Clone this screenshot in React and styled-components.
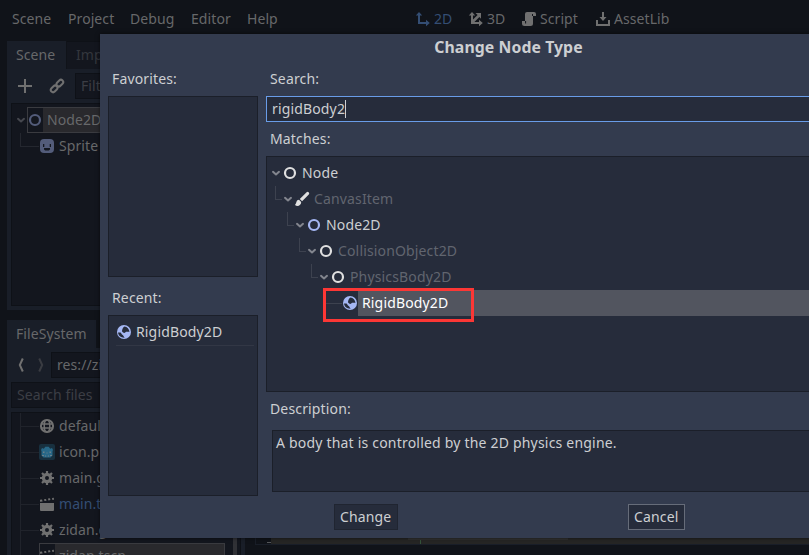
import React from 'react';
import styled, { createGlobalStyle } from 'styled-components';

const Global = createGlobalStyle`
  * { box-sizing: border-box; }
  body { margin: 0; background: #101319; overflow: hidden; }
`;

const c = {
  bar: '#101319', panel: '#191e28', field: '#13161e', line: '#0e1117',
  text: '#67686a', faint: '#3c3e45', accent: '#344e74', icon: '#707070', node2d: '#535c7a',
  dialog: '#333b4e', inset: '#262c3b', edge: '#1b1f29', label: '#cdcfd2', dim: '#61656f',
  white: '#e0e0e0', blue: '#a5b7f3',
};

const Screen = styled.div`
  position: relative;
  width: 809px;
  height: 555px;
  overflow: hidden;
  display: flex;
  flex-direction: column;
  background: ${c.bar};
  color: ${c.text};
  font: 14px/20px "Noto Sans", sans-serif;
  letter-spacing: 0.08px;
  white-space: nowrap;
`;
const MenuBar = styled.header`
  display: flex;
  flex: none;
  height: 41px;
  padding: 0 0 3px 12px;
  align-items: center;
`;
const MenuItem = styled.span`
  width: ${(p) => p.$w}px;
`;
const Mode = styled.span`
  display: flex;
  align-items: center;
  gap: 3px;
  width: ${(p) => p.$w}px;
  color: ${(p) => (p.$active ? c.accent : c.text)};
`;
const Icon = styled.svg`
  display: block;
  flex: none;
  width: 16px;
  height: 16px;
  color: ${(p) => p.$color || c.icon};
`;
const Workspace = styled.div`
  display: flex;
  flex: 1;
  min-height: 0;
`;
const DockColumn = styled.aside`
  display: flex;
  flex-direction: column;
  gap: 10px;
  width: 238px;
  margin-left: 7px;
`;
const Dock = styled.section`
  flex: none;
  height: ${(p) => p.$h}px;
  display: flex;
  flex-direction: column;
`;
const Tabs = styled.div`
  display: flex;
  gap: 1px;
  height: 28px;
`;
const Tab = styled.div`
  width: ${(p) => p.$w}px;
  padding: 3px 0 0 9px;
  color: ${(p) => (p.$active ? c.text : '#33363d')};
  background: ${(p) => (p.$active ? c.panel : c.field)};
  border: 1px solid ${(p) => (p.$active ? c.panel : c.line)};
  border-width: 1px 1px 0 0;
`;
const DockBody = styled.div`
  flex: 1;
  min-height: 0;
  padding: 4px;
  background: ${c.panel};
  display: flex;
  flex-direction: column;
  gap: 4px;
`;
const Tools = styled.div`
  display: flex;
  align-items: center;
  height: 26px;
  padding-left: ${(p) => p.$pad}px;
  gap: ${(p) => p.$gap}px;
`;
const Field = styled.div`
  flex: 1;
  height: 26px;
  margin-left: ${(p) => p.$shift || 0}px;
  padding: 2px 5px;
  background: ${c.field};
  border: 1px solid ${c.line};
  color: ${(p) => (p.$faint ? c.faint : c.text)};
`;
const SearchFiles = styled(Field)`
  flex: none;
`;
const DarkTree = styled.div`
  flex: 1;
  min-height: 0;
  overflow: hidden;
  display: flex;
  justify-content: space-between;
  padding-top: ${(p) => p.$pad}px;
  background: ${c.field};
  border: 1px solid ${c.line};
`;
const TreeRows = styled.div`
  flex: 1;
`;
const Scrollbar = styled.div`
  width: 4px;
  margin-right: 3px;
  background: #303136;
`;
const DockRow = styled.div`
  display: flex;
  align-items: center;
  height: 26px;
  padding-left: ${(p) => p.$indent}px;
  color: ${(p) => (p.$active ? c.accent : c.text)};
`;
const DockPick = styled.div`
  display: flex;
  align-items: center;
  height: 26px;
  width: ${(p) => p.$w}px;
  border: 1px solid #3a3b40;

  & > svg { margin-left: -1px; }
`;
const DockPickText = styled.div`
  flex: 1;
  height: 24px;
  padding: 2px 0 0 4px;
  background: #29292d;
`;
const Branch = styled.i`
  flex: none;
  align-self: stretch;
  width: 19px;
  border-left: 1px solid #20232b;
  background: linear-gradient(#20232b, #20232b) left 13px / 19px 1px no-repeat;
`;
const RowLabel = styled.span`
  margin-left: 4px;
`;
const Canvas = styled.main`
  flex: 1;
  padding: 0 0 10px 10px;
  display: flex;
`;
const Track = styled.div`
  flex: 1;
  display: flex;
  align-items: flex-end;
  border: 1px solid #191e28;
  border-right: 0;
`;
const TrackHead = styled.div`
  display: flex;
  align-items: flex-end;
  justify-content: flex-end;
  width: 15px;
  height: 100%;
  padding-bottom: 1px;

  &::after {
    content: "";
    width: 4px;
    height: 1px;
    background: #55575a;
  }
`;
const TrackLane = styled.div`
  display: flex;
  flex: 1;
  height: 100%;
  padding: 0 0 4px 137px;
  background: linear-gradient(#34533a, #34533a) 149px 0 / 1px 100% no-repeat, #262625;
`;
const TrackClip = styled.div`
  width: 160px;
  background: #303030;
`;

const Dialog = styled.div`
  position: absolute;
  left: 100px;
  top: 34px;
  width: 817px;
  height: 504px;
  padding: 0 8px;
  background: ${c.dialog};
  color: ${c.label};
  letter-spacing: 0.15px;
  box-shadow: 0 0 4px rgba(0, 0, 0, 0.6);
`;
const Title = styled.h1`
  margin: 0;
  height: 35px;
  padding-top: 3px;
  font: 700 15.8px/20px "Noto Sans", sans-serif;
  letter-spacing: 0.08px;
  text-align: center;
`;
const Columns = styled.div`
  display: flex;
  gap: 8px;
  height: 393px;
`;
const Left = styled.div`
  width: 150px;
`;
const Right = styled.div`
  flex: 1;
`;
const Label = styled.div`
  height: ${(p) => p.$h}px;
  line-height: 20px;
  padding: ${(p) => p.$top}px 0 0 4px;
`;
const Box = styled.div`
  height: ${(p) => p.$h}px;
  background: ${c.inset};
  border: 1px solid ${c.edge};
  padding: ${(p) => p.$pad || '0'};
`;
const Description = styled(Box)`
  margin-left: 6px;
  letter-spacing: 0.2px;
`;
const SearchInput = styled.div`
  display: flex;
  align-items: center;
  height: 26px;
  padding-left: 5px;
  background: ${c.inset};
  border: 1px solid #699ce8;
`;
const Caret = styled.i`
  width: 1px;
  height: 18px;
  background: ${c.label};
`;
const RecentRow = styled.div`
  display: flex;
  align-items: center;
  gap: 4px;
  height: 27px;
  padding-bottom: 1px;
  border-bottom: 1px solid #323745;
`;
const Match = styled.div`
  display: flex;
  align-items: center;
  height: 26px;
  padding-left: ${(p) => p.$indent}px;
  color: ${(p) => (p.$dim ? c.dim : c.label)};
`;
const Elbow = styled.i`
  flex: none;
  align-self: flex-start;
  width: ${(p) => p.$w || 7}px;
  height: 14px;
  margin-right: ${(p) => p.$gap || 0}px;
  border: solid ${(p) => p.$color || '#3d424f'};
  border-width: 0 0 1px 1px;
`;
const Dash = styled.i`
  width: 17px;
  height: 1px;
  background: #3d424f;
`;
const Picked = styled.div`
  flex: 1;
  align-self: stretch;
  padding: 3px 4px;
  color: #fff;
  background: #52555f;
`;
const Outline = styled.div`
  position: absolute;
  left: 323px;
  top: 288px;
  width: 151px;
  height: 34px;
  border: 3px solid #fc3735;
`;
const Actions = styled.div`
  display: flex;
  align-items: center;
  height: 26px;
  margin-top: 42px;
  padding-left: 226px;
  gap: 230px;
`;
const Button = styled.div`
  height: 26px;
  width: ${(p) => p.$w}px;
  padding-left: 5px;
  line-height: 24px;
  background: ${c.inset};
  border: 1px solid ${(p) => (p.$focus ? '#666c79' : '#202531')};
`;
const ArrowSlot = styled.span`
  width: 14px;
  margin-left: ${(p) => (p.$first ? 0 : -2)}px;
`;

const Svg = ({ color, children }) => (
  <Icon viewBox="0 0 16 16" $color={color} fill="currentColor">{children}</Icon>
);
const Ring = ({ color }) => (
  <Svg color={color}><circle cx="8" cy="8" r="5" fill="none" stroke="currentColor" strokeWidth="2.2" /></Svg>
);
const Arrow = ({ color = '#83868e' }) => (
  <Svg color={color}><path d="M5 6.8 8 9.5 11 6.8" fill="none" stroke="currentColor" strokeWidth="2" strokeLinecap="round" strokeLinejoin="round" /></Svg>
);
const Rigid = () => (
  <Svg color={c.blue}>
    <circle cx="8" cy="8" r="7" />
    <path fill={c.inset} d="M8.5 2.400C11.200 2.800 13.300 5 13.500 7.800H10A2.100 2.100 0 0 1 6.300 5.600C6.600 4.200 7.400 3 8.500 2.400zM2 8.500h2.500C5.500 9 5.300 10.500 7 11.200l1.600 2.500C5 13.900 2.300 11.500 2 8.500z" />
  </Svg>
);
const Gear = () => (
  <Svg>
    <circle cx="8" cy="8" r="3.600" fill="none" stroke="currentColor" strokeWidth="3.200" />
    <path d="M8 1v3M8 12v3M1 8h3M12 8h3M3 3l2.200 2.200M10.800 10.800 13 13M13 3l-2.200 2.200M5.200 10.800 3 13" stroke="currentColor" strokeWidth="2.200" />
  </Svg>
);
const Clapper = () => (
  <Svg>
    <path d="M1 7h14v7a1 1 0 0 1-1 1H2a1 1 0 0 1-1-1z" />
    <path d="M1 3.800l2-.3.6 2-2.600.2zM5 3.200l2-.3.5 1.800-2 .3zM9 2.600l2-.3.400 1.800-2 .3zM13 2l1.800-.3.2 2-1.600.2z" />
  </Svg>
);
const Globe = () => (
  <Svg>
    <g fill="none" stroke="currentColor" strokeWidth="1.500">
      <circle cx="8" cy="8" r="6.100" strokeWidth="2" />
      <ellipse cx="8" cy="8" rx="2.800" ry="6" />
      <path d="M2 6h12M2 10h12" />
    </g>
  </Svg>
);
const Robot = () => (
  <Svg>
    <rect width="16" height="16" rx="2" fill="#18303f" />
    <path d="M2 6 3 4l1.800.8L6.300 2.800h3.400l1.500 2L13 4l1 2-.5 1v4.500L11.500 13.500h-7L2.500 11.500V7z" fill="#286888" />
    <path d="M4 7.500h1.500V9H4zM10.500 7.500H12V9h-1.500zM7.500 8.500h1v1h-1zM3 11h2v1H3zM6 11.500h1.200v1H6zM8.800 11.500H10v1H8.800zM11 11h2v1h-2z" fill="#6c8089" />
  </Svg>
);

const FileRow = ({ icon, name, active }) => (
  <DockRow $indent={8} $active={active}>
    <Branch />{icon}<RowLabel>{name}</RowLabel>
  </DockRow>
);
const MatchRow = ({ depth, name, dim, icon }) => (
  <Match $indent={depth ? 8 + (depth - 1) * 12 : 1} $dim={dim}>
    {depth > 0 && <Elbow />}
    <ArrowSlot $first={depth === 0}><Arrow /></ArrowSlot>
    {icon}
    <RowLabel>{name}</RowLabel>
  </Match>
);

export default function App() {
  return (
    <Screen>
      <Global />
      <MenuBar>
        <MenuItem $w={56}>Scene</MenuItem>
        <MenuItem $w={62}>Project</MenuItem>
        <MenuItem $w={61}>Debug</MenuItem>
        <MenuItem $w={56}>Editor</MenuItem>
        <MenuItem $w={168}>Help</MenuItem>
        <Mode $w={53} $active>
          <Svg color={c.accent}><path d="M4 1 .8 4.500H3V13h8v2.200L14.800 12 11 8.800V11H5V4.500h2.200z" /></Svg>2D
        </Mode>
        <Mode $w={53}>
          <Svg><path d="M4 1 .8 4.500H3V13h8v2.200L14.800 12 11 8.800V11H6.400l5-5L13 7.800V2H7.500l2.100 2L5 8.600V4.500h2.200z" /></Svg>3D
        </Mode>
        <Mode $w={74}>
          <Svg><path d="M6 1a2 2 0 0 0-2 2v7H1v2.500A2.500 2.500 0 0 0 3.500 15H9.500a2.500 2.500 0 0 0 2.500-2.500V5h3V3a2 2 0 0 0-2-2z" /><path d="M4.600 10v2.500M11.500 3v2" stroke={c.bar} /></Svg>Script
        </Mode>
        <Mode $w={90}>
          <Svg><path d="M7 1h2v5h2.500L8 10 4.500 6H7zM1 9h2v4h10V9h2v6H1z" /></Svg>AssetLib
        </Mode>
      </MenuBar>
      <Workspace>
        <DockColumn>
          <Dock $h={269}>
            <Tabs><Tab $w={59} $active>Scene</Tab><Tab $w={60}>Import</Tab></Tabs>
            <DockBody>
              <Tools $pad={6} $gap={16}>
                <Svg><path d="M7 1h2v6h6v2H9v6H7V9H1V7h6z" /></Svg>
                <Svg>
                  <g fill="none" stroke="currentColor" strokeWidth="2">
                    <rect x="-3.500" y="-2.300" width="7.500" height="4.600" rx="2.300" transform="translate(10.700 5.300) rotate(-45)" />
                    <rect x="-4" y="-2.300" width="7.500" height="4.600" rx="2.300" transform="translate(5.300 10.700) rotate(-45)" />
                  </g>
                </Svg>
                <Field $faint $shift={-6}>Filter nodes</Field>
              </Tools>
              <DarkTree $pad={3}>
                <TreeRows>
                  <DockRow $indent={1}>
                    <ArrowSlot $first><Arrow color="#45474e" /></ArrowSlot>
                    <DockPick $w={208}><Ring color={c.node2d} /><DockPickText>Node2D</DockPickText></DockPick>
                  </DockRow>
                  <DockRow $indent={8}>
                    <Elbow $w={19} $color="#24272f" />
                    <Svg color={c.node2d}>
                      <rect x="1" y="1" width="14" height="14" rx="4" />
                      <path d="M4 6h1.300v3H4zM10.700 6H12v3h-1.300zM5 10h6v1.500l-1.200 1H6.200L5 11.500z" fill={c.field} />
                    </Svg>
                    <RowLabel>Sprite</RowLabel>
                  </DockRow>
                </TreeRows>
              </DarkTree>
            </DockBody>
          </Dock>
          <Dock $h={260}>
            <Tabs><Tab $w={89} $active>FileSystem</Tab></Tabs>
            <DockBody>
              <Tools $pad={2} $gap={4}>
                <Svg><path d="M9.800 1.500 6.800 8l3 6.500" fill="none" stroke="currentColor" strokeWidth="2" /></Svg>
                <Svg color="#3a3c42"><path d="M6.200 1.500l3 6.500-3 6.500" fill="none" stroke="currentColor" strokeWidth="2" /></Svg>
                <Field $shift={-2}>res://zidan.tscn</Field>
              </Tools>
              <SearchFiles $faint>Search files</SearchFiles>
              <DarkTree $pad={0}>
                <TreeRows>
                  <FileRow icon={<Globe />} name="default_env.tres" />
                  <FileRow icon={<Robot />} name="icon.png" />
                  <FileRow icon={<Gear />} name="main.gd" />
                  <FileRow icon={<Clapper />} name="main.tscn" active />
                  <FileRow icon={<Gear />} name="zidan.gd" />
                  <DockRow $indent={8}>
                    <Branch />
                    <DockPick $w={186}><Clapper /><DockPickText>zidan.tscn</DockPickText></DockPick>
                  </DockRow>
                </TreeRows>
                <Scrollbar />
              </DarkTree>
            </DockBody>
          </Dock>
        </DockColumn>
        <Canvas><Track><TrackHead /><TrackLane><TrackClip /></TrackLane></Track></Canvas>
      </Workspace>

      <Dialog>
        <Title>Change Node Type</Title>
        <Columns>
          <Left>
            <Label $h={27} $top={0}>Favorites:</Label>
            <Box $h={181} />
            <Label $h={38} $top={11}>Recent:</Label>
            <Box $h={181} $pad="3px 3px 0 7px">
              <RecentRow><Rigid />RigidBody2D</RecentRow>
            </Box>
          </Left>
          <Right>
            <Label $h={27} $top={0}>Search:</Label>
            <SearchInput>rigidBody2<Caret /></SearchInput>
            <Label $h={34} $top={7}>Matches:</Label>
            <Box $h={236} $pad="3px 0 0">
              <MatchRow depth={0} name="Node" icon={<Ring color={c.white} />} />
              <MatchRow depth={1} name="CanvasItem" dim icon={
                <Svg color={c.white}><path d="M14.600 1.200a1.500 1.500 0 0 0-2 .1L5.800 8l2.300 2.300 6.700-6.900a1.500 1.500 0 0 0-.2-2.200zM5 8.800c-3 0-2 3-4 5.200 2.500 2 6.200.5 6.200-3z" /></Svg>
              } />
              <MatchRow depth={2} name="Node2D" icon={<Ring color={c.blue} />} />
              <MatchRow depth={3} name="CollisionObject2D" dim icon={<Ring color={c.white} />} />
              <MatchRow depth={4} name="PhysicsBody2D" dim icon={<Ring color={c.white} />} />
              <Match $indent={58}><Dash /><Rigid /><Picked>RigidBody2D</Picked></Match>
            </Box>
            <Label $h={38} $top={7}>Description:</Label>
            <Description $h={62} $pad="2px 3px">A body that is controlled by the 2D physics engine.</Description>
          </Right>
        </Columns>
        <Actions>
          <Button $w={64}>Change</Button>
          <Button $w={57} $focus>Cancel</Button>
        </Actions>
      </Dialog>
      <Outline />
    </Screen>
  );
}
